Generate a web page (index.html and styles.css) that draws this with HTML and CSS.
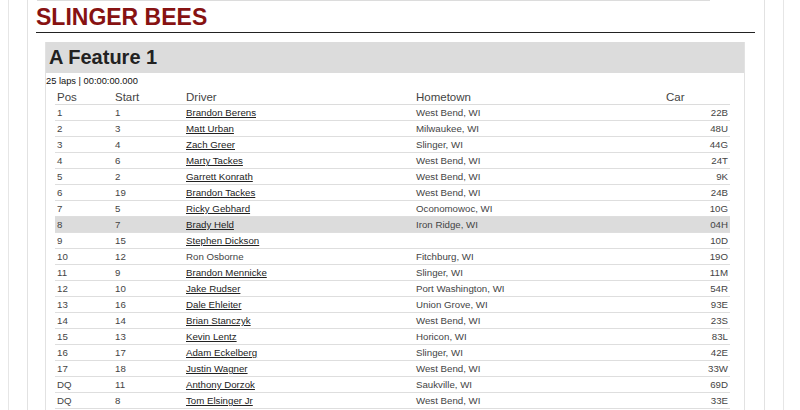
FILE: index.html
```html
<!DOCTYPE html>
<html>
<head>
<meta charset="utf-8">
<link rel="stylesheet" href="styles.css">
</head>
<body>
<div class="page">
  <div class="wrap">
    <div class="topbar"></div>
    <h1 class="track">SLINGER BEES</h1>
    <div class="feature">
      <h2 class="feature-title">A Feature 1</h2>
      <div class="laps">25 laps | 00:00:00.000</div>
      <table class="results">
        <colgroup>
          <col class="c-pos"><col class="c-start"><col class="c-driver"><col class="c-town"><col class="c-car">
        </colgroup>
        <thead>
          <tr><th>Pos</th><th>Start</th><th>Driver</th><th>Hometown</th><th>Car</th></tr>
        </thead>
        <tbody>
          <tr><td>1</td><td>1</td><td><a href="#">Brandon Berens</a></td><td>West Bend, WI</td><td class="car">22B</td></tr>
          <tr><td>2</td><td>3</td><td><a href="#">Matt Urban</a></td><td>Milwaukee, WI</td><td class="car">48U</td></tr>
          <tr><td>3</td><td>4</td><td><a href="#">Zach Greer</a></td><td>Slinger, WI</td><td class="car">44G</td></tr>
          <tr><td>4</td><td>6</td><td><a href="#">Marty Tackes</a></td><td>West Bend, WI</td><td class="car">24T</td></tr>
          <tr><td>5</td><td>2</td><td><a href="#">Garrett Konrath</a></td><td>West Bend, WI</td><td class="car">9K</td></tr>
          <tr><td>6</td><td>19</td><td><a href="#">Brandon Tackes</a></td><td>West Bend, WI</td><td class="car">24B</td></tr>
          <tr><td>7</td><td>5</td><td><a href="#">Ricky Gebhard</a></td><td>Oconomowoc, WI</td><td class="car">10G</td></tr>
          <tr class="hl"><td>8</td><td>7</td><td><a href="#">Brady Held</a></td><td>Iron Ridge, WI</td><td class="car">04H</td></tr>
          <tr><td>9</td><td>15</td><td><a href="#">Stephen Dickson</a></td><td></td><td class="car">10D</td></tr>
          <tr><td>10</td><td>12</td><td>Ron Osborne</td><td>Fitchburg, WI</td><td class="car">19O</td></tr>
          <tr><td>11</td><td>9</td><td><a href="#">Brandon Mennicke</a></td><td>Slinger, WI</td><td class="car">11M</td></tr>
          <tr><td>12</td><td>10</td><td><a href="#">Jake Rudser</a></td><td>Port Washington, WI</td><td class="car">54R</td></tr>
          <tr><td>13</td><td>16</td><td><a href="#">Dale Ehleiter</a></td><td>Union Grove, WI</td><td class="car">93E</td></tr>
          <tr><td>14</td><td>14</td><td><a href="#">Brian Stanczyk</a></td><td>West Bend, WI</td><td class="car">23S</td></tr>
          <tr><td>15</td><td>13</td><td><a href="#">Kevin Lentz</a></td><td>Horicon, WI</td><td class="car">83L</td></tr>
          <tr><td>16</td><td>17</td><td><a href="#">Adam Eckelberg</a></td><td>Slinger, WI</td><td class="car">42E</td></tr>
          <tr><td>17</td><td>18</td><td><a href="#">Justin Wagner</a></td><td>West Bend, WI</td><td class="car">33W</td></tr>
          <tr><td>DQ</td><td>11</td><td><a href="#">Anthony Dorzok</a></td><td>Saukville, WI</td><td class="car">69D</td></tr>
          <tr><td>DQ</td><td>8</td><td><a href="#">Tom Elsinger Jr</a></td><td>West Bend, WI</td><td class="car">33E</td></tr>
        </tbody>
      </table>
    </div>
  </div>
</div>
</body>
</html>
```
FILE: styles.css
```css
html, body {
  margin: 0;
  padding: 0;
  background: #fff;
  overflow: hidden;
}
body {
  font-family: "Liberation Sans", Arial, sans-serif;
  color: #333;
}
.page {
  margin-left: 8px;
  width: 774px;
  height: 410px;
  overflow: hidden;
  border-left: 1px solid #e6e6e6;
  border-right: 1px solid #e6e6e6;
}
.wrap {
  margin: 0 18px;
  height: 410px;
  padding: 0 9px 0 8px;
  border-left: 1px solid #e2e2e2;
  border-right: 1px solid #e2e2e2;
}
.topbar {
  height: 1px;
  width: 673px;
  margin-left: 1px;
  background: #dcdcdc;
}
.track {
  margin: 0;
  padding-top: 1px;
  font-size: 23px;
  line-height: 30px;
  font-weight: bold;
  color: #871212;
  border-bottom: 1px solid #222;
}
.feature {
  margin: 9px 10px 0 9px;
  border-left: 1px solid #e2e2e2;
  border-right: 1px solid #e2e2e2;
  height: 368px;
  overflow: hidden;
}
.feature-title {
  margin: 0;
  height: 31px;
  line-height: 31px;
  padding-left: 3px;
  background: #dcdcdc;
  font-size: 20px;
  font-weight: bold;
  color: #222;
}
.laps {
  font-size: 9.3px;
  line-height: 16px;
  height: 16px;
  color: #111;
}
.results {
  margin-left: 9px;
  width: 675px;
  border-collapse: collapse;
  border-spacing: 0;
  table-layout: fixed;
}
.c-pos { width: 58px; }
.c-start { width: 71px; }
.c-driver { width: 230px; }
.c-town { width: 250px; }
.c-car { width: 66px; }
.results th {
  text-align: left;
  font-weight: normal;
  font-size: 11.5px;
  line-height: 13px;
  padding: 2px 2px 0;
  color: #444;
  border-bottom: 1px solid #dcdcdc;
}
.results td {
  font-size: 9.7px;
  line-height: 14px;
  padding: 1px 2px 0;
  color: #444;
  border-bottom: 1px solid #dedede;
  white-space: nowrap;
}
.results td.car {
  text-align: right;
}
.results a {
  color: #222;
  text-decoration: underline;
}
.results tr.hl td {
  background: #dcdcdc;
}
```
